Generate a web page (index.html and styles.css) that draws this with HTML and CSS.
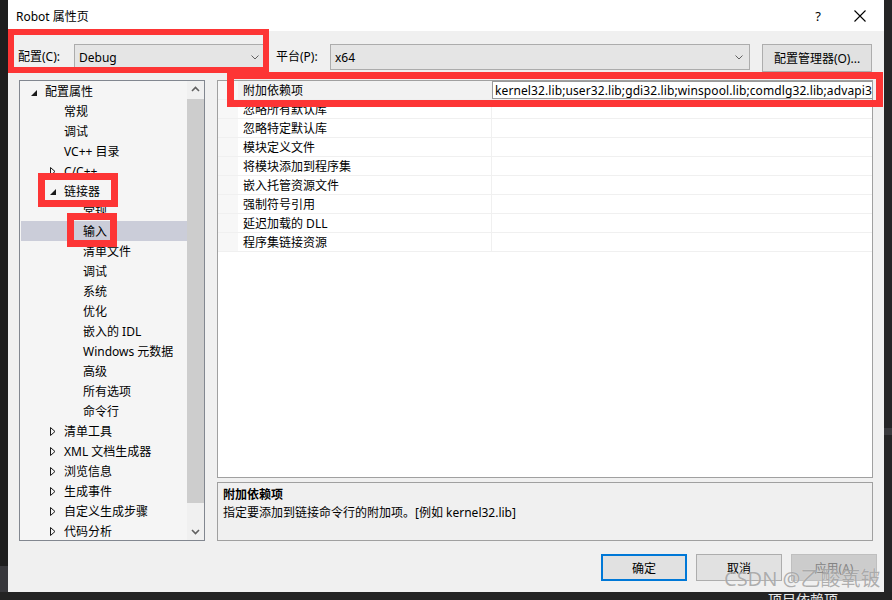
FILE: index.html
```html
<!DOCTYPE html>
<html lang="zh-CN">
<head>
<meta charset="utf-8">
<title>Robot 属性页</title>
<link rel="stylesheet" href="styles.css">
</head>
<body>
<div class="screen">
  <div class="top">
    <div class="edge-left"><div class="el-a"></div><div class="el-b"></div></div>
    <div class="dialog">
      <div class="titlebar">
        <span class="title">Robot 属性页</span>
        <span class="help">?</span>
        <span class="close"><svg width="12" height="12" viewBox="0 0 12 12"><path d="M0.5 0.5 L11.5 11.5 M11.5 0.5 L0.5 11.5" stroke="#000" stroke-width="1.1" fill="none"/></svg></span>
      </div>
      <div class="toolbar">
        <span class="lbl lbl-cfg">配置(C):</span>
        <div class="combo combo-cfg"><span class="combo-text">Debug</span><svg class="chev" width="8" height="5" viewBox="0 0 8 5"><path d="M0.5 0.5 L4 4 L7.5 0.5" stroke="#606060" fill="none"/></svg></div>
        <span class="lbl lbl-plat">平台(P):</span>
        <div class="combo combo-plat"><span class="combo-text">x64</span><svg class="chev" width="8" height="5" viewBox="0 0 8 5"><path d="M0.5 0.5 L4 4 L7.5 0.5" stroke="#606060" fill="none"/></svg></div>
        <button class="btn-mgr">配置管理器(O)...</button>
      </div>
      <div class="main">
        <div class="tree">
          <ul class="tree-list">
            <li class="row l0"><span class="arw"><svg width="19" height="20" viewBox="0 0 19 20"><path d="M11 9 L11 15 L5 15 Z" fill="#1a1a1a"/></svg></span>配置属性</li>
            <li class="row l1"><span class="arw"></span>常规</li>
            <li class="row l1"><span class="arw"></span>调试</li>
            <li class="row l1"><span class="arw"></span>VC++ 目录</li>
            <li class="row l1"><span class="arw"><svg width="19" height="20" viewBox="0 0 19 20"><path d="M5.5 6.5 L5.5 14.5 L10 10.5 Z" fill="none" stroke="#1a1a1a"/></svg></span>C/C++</li>
            <li class="row l1"><span class="arw"><svg width="19" height="20" viewBox="0 0 19 20"><path d="M11 8 L11 14 L5 14 Z" fill="#1a1a1a"/></svg></span>链接器</li>
            <li class="row l2"><span class="arw"></span>常规</li>
            <li class="row l2 sel"><span class="arw"></span>输入</li>
            <li class="row l2"><span class="arw"></span>清单文件</li>
            <li class="row l2"><span class="arw"></span>调试</li>
            <li class="row l2"><span class="arw"></span>系统</li>
            <li class="row l2"><span class="arw"></span>优化</li>
            <li class="row l2"><span class="arw"></span>嵌入的 IDL</li>
            <li class="row l2"><span class="arw"></span>Windows 元数据</li>
            <li class="row l2"><span class="arw"></span>高级</li>
            <li class="row l2"><span class="arw"></span>所有选项</li>
            <li class="row l2"><span class="arw"></span>命令行</li>
            <li class="row l1"><span class="arw"><svg width="19" height="20" viewBox="0 0 19 20"><path d="M5.5 6.5 L5.5 14.5 L10 10.5 Z" fill="none" stroke="#1a1a1a"/></svg></span>清单工具</li>
            <li class="row l1"><span class="arw"><svg width="19" height="20" viewBox="0 0 19 20"><path d="M5.5 6.5 L5.5 14.5 L10 10.5 Z" fill="none" stroke="#1a1a1a"/></svg></span>XML 文档生成器</li>
            <li class="row l1"><span class="arw"><svg width="19" height="20" viewBox="0 0 19 20"><path d="M5.5 6.5 L5.5 14.5 L10 10.5 Z" fill="none" stroke="#1a1a1a"/></svg></span>浏览信息</li>
            <li class="row l1"><span class="arw"><svg width="19" height="20" viewBox="0 0 19 20"><path d="M5.5 6.5 L5.5 14.5 L10 10.5 Z" fill="none" stroke="#1a1a1a"/></svg></span>生成事件</li>
            <li class="row l1"><span class="arw"><svg width="19" height="20" viewBox="0 0 19 20"><path d="M5.5 6.5 L5.5 14.5 L10 10.5 Z" fill="none" stroke="#1a1a1a"/></svg></span>自定义生成步骤</li>
            <li class="row l1"><span class="arw"><svg width="19" height="20" viewBox="0 0 19 20"><path d="M5.5 6.5 L5.5 14.5 L10 10.5 Z" fill="none" stroke="#1a1a1a"/></svg></span>代码分析</li>
          </ul>
          <div class="scrollbar">
            <div class="sb-btn"><svg width="17" height="17" viewBox="0 0 17 17"><path d="M5 10 L8.5 6.5 L12 10" stroke="#606060" stroke-width="1.6" fill="none"/></svg></div>
            <div class="sb-thumb"></div>
            <div class="sb-space"></div>
            <div class="sb-btn"><svg width="17" height="17" viewBox="0 0 17 17"><path d="M5 7 L8.5 10.5 L12 7" stroke="#606060" stroke-width="1.6" fill="none"/></svg></div>
          </div>
        </div>
        <div class="right">
          <div class="grid">
            <div class="grow first"><span class="gut"></span><span class="gname">附加依赖项</span><span class="gval edit">kernel32.lib;user32.lib;gdi32.lib;winspool.lib;comdlg32.lib;advapi32.lib;shell32.lib;ole32.lib;oleaut32.lib;uuid.lib</span></div>
            <div class="grow"><span class="gut"></span><span class="gname">忽略所有默认库</span><span class="gval"></span></div>
            <div class="grow"><span class="gut"></span><span class="gname">忽略特定默认库</span><span class="gval"></span></div>
            <div class="grow"><span class="gut"></span><span class="gname">模块定义文件</span><span class="gval"></span></div>
            <div class="grow"><span class="gut"></span><span class="gname">将模块添加到程序集</span><span class="gval"></span></div>
            <div class="grow"><span class="gut"></span><span class="gname">嵌入托管资源文件</span><span class="gval"></span></div>
            <div class="grow"><span class="gut"></span><span class="gname">强制符号引用</span><span class="gval"></span></div>
            <div class="grow"><span class="gut"></span><span class="gname">延迟加载的 DLL</span><span class="gval"></span></div>
            <div class="grow"><span class="gut"></span><span class="gname">程序集链接资源</span><span class="gval"></span></div>
          </div>
          <div class="desc">
            <div class="desc-title">附加依赖项</div>
            <div class="desc-text">指定要添加到链接命令行的附加项。[例如 kernel32.lib]</div>
          </div>
        </div>
      </div>
      <div class="footer">
        <button class="btn btn-ok">确定</button>
        <button class="btn">取消</button>
        <button class="btn btn-dis">应用(A)</button>
      </div>
    </div>
    <div class="edge-right"><div class="er-band"></div></div>
  </div>
  <div class="edge-bottom"><span class="bottom-text">项目依赖项</span></div>

  <div class="mark mark-cfg"></div>
  <div class="mark mark-dep"></div>
  <div class="mark mark-linker"></div>
  <div class="mark mark-input"></div>
  <div class="watermark">CSDN @乙酸氧铍</div>
</div>
</body>
</html>
```
FILE: styles.css
```css
* { box-sizing: border-box; }
html, body { margin: 0; padding: 0; }
body {
  background: #1e1e1e;
  font-family: "Noto Sans", "Noto Sans CJK SC", sans-serif;
  font-size: 12px;
  color: #000;
}
.screen {
  position: relative;
  width: 892px;
  height: 600px;
  overflow: hidden;
}
.top { display: flex; height: 592px; }
.edge-left { width: 8px; display: flex; flex-direction: column; }
.el-a { height: 566px; background: #1e1e1e; }
.el-b { flex: 1; background: #38383c; }
.edge-right { width: 8px; background: #252526; padding-top: 428px; }
.er-band { height: 7px; background: #3a3a3d; }
.edge-bottom {
  height: 8px;
  background: #232323;
  overflow: hidden;
  padding-left: 768px;
}
.bottom-text {
  display: block;
  color: #e8e8e8;
  font-size: 14px;
  line-height: 14px;
  margin-top: 1px;
}

.dialog {
  width: 876px;
  height: 592px;
  background: #f0f0f0;
  display: flex;
  flex-direction: column;
}
.titlebar {
  height: 31px;
  background: #fff;
  display: flex;
  align-items: center;
  padding-left: 8px;
}
.title { flex: 1; font-size: 12px; }
.help { width: 20px; font-size: 13px; margin-right: 26px; text-align: center; }
.close { width: 12px; height: 12px; margin-right: 18px; display: flex; }

.toolbar {
  margin-top: 13px;
  height: 28px;
  display: flex;
  align-items: flex-start;
  padding-left: 10px;
}
.lbl { line-height: 26px; white-space: nowrap; }
.lbl-cfg { width: 56px; }
.lbl-plat { width: 54px; margin-left: 10px; }
.combo {
  height: 26px;
  background: #e5e5e5;
  border: 1px solid #acacac;
  display: flex;
  align-items: center;
  padding: 0 6px 0 4px;
}
.combo-text { flex: 1; }
.chev { display: block; }
.combo-cfg { width: 192px; }
.combo-plat { width: 420px; }
.btn-mgr {
  margin-left: 12px;
  width: 110px;
  height: 28px;
  background: #e1e1e1;
  border: 1px solid #adadad;
  font: inherit;
  padding: 0;
}

.main {
  margin-top: 8px;
  height: 461px;
  display: flex;
  padding-left: 11px;
}
.tree {
  width: 186px;
  border: 1px solid #828790;
  background: #f5f5f5;
  display: flex;
}
.tree-list {
  list-style: none;
  margin: 0;
  padding: 0;
  flex: 1;
  overflow: hidden;
}
.row {
  height: 20px;
  line-height: 19px;
  padding-top: 1px;
  display: flex;
  white-space: nowrap;
}
.row .arw { width: 19px; height: 19px; flex: none; margin-top: -1px; }
.row .arw svg { display: block; }
.l0 { padding-left: 6px; }
.l1 { padding-left: 25px; }
.l2 { padding-left: 44px; }
.row.sel { background: #cbcdd9; margin-left: 1px; padding-left: 43px; }

.scrollbar {
  width: 17px;
  background: #f0f0f0;
  display: flex;
  flex-direction: column;
}
.sb-btn { height: 17px; }
.sb-btn svg { display: block; }
.sb-thumb { margin-top: 1px; height: 404px; background: #cdcdcd; }
.sb-space { flex: 1; }

.right {
  margin-left: 12px;
  width: 656px;
  display: flex;
  flex-direction: column;
  gap: 4px;
}
.grid {
  height: 398px;
  border: 1px solid #a0a0a0;
  background: #fff;
  overflow: hidden;
}
.grow {
  height: 19px;
  display: flex;
  border-bottom: 1px solid #f0f0f0;
}
.gut { width: 20px; background: #f7f7f7; flex: none; }
.gname {
  width: 254px;
  flex: none;
  padding: 2px 0 0 5px;
  line-height: 16px;
  border-right: 1px solid #f0f0f0;
}
.first .gname { background: #f2f2f2; }
.gval {
  flex: 1;
  overflow: hidden;
  white-space: nowrap;
  padding-top: 2px;
  line-height: 16px;
}
.gval.edit {
  border: 1px solid #9a9a9a;
  padding: 1px 0 0 2px;
  line-height: 16px;
  margin-right: -1px;
  letter-spacing: 0.1px;
}

.desc {
  height: 59px;
  border: 1px solid #a0a0a0;
  padding: 3px 5px 2px;
  line-height: 18px;
}
.desc-title { font-weight: bold; }

.footer {
  margin-top: 13px;
  display: flex;
  justify-content: flex-end;
  gap: 9px;
  padding-right: 7px;
}
.btn {
  width: 86px;
  height: 27px;
  background: #e1e1e1;
  border: 1px solid #adadad;
  font: inherit;
  padding: 0;
  color: #000;
}
.btn-ok { border: 2px solid #0078d7; }
.btn-dis { background: #cccccc; border-color: #bfbfbf; color: #838383; }

.mark {
  position: absolute;
  border: 7px solid #fd3535;
}
.mark-cfg { left: 8px; top: 29px; width: 261px; height: 44px; border-width: 6px; }
.mark-dep { left: 227px; top: 72px; width: 656px; height: 35px; }
.mark-linker { left: 38px; top: 173px; width: 80px; height: 34px; }
.mark-input { left: 67px; top: 213px; width: 50px; height: 34px; }

.watermark {
  position: absolute;
  left: 724px;
  top: 566px;
  font-size: 20px;
  line-height: 26px;
  color: rgba(150, 150, 150, 0.75);
  text-shadow: 0 0 1px rgba(255, 255, 255, 0.6);
  white-space: nowrap;
}
```
